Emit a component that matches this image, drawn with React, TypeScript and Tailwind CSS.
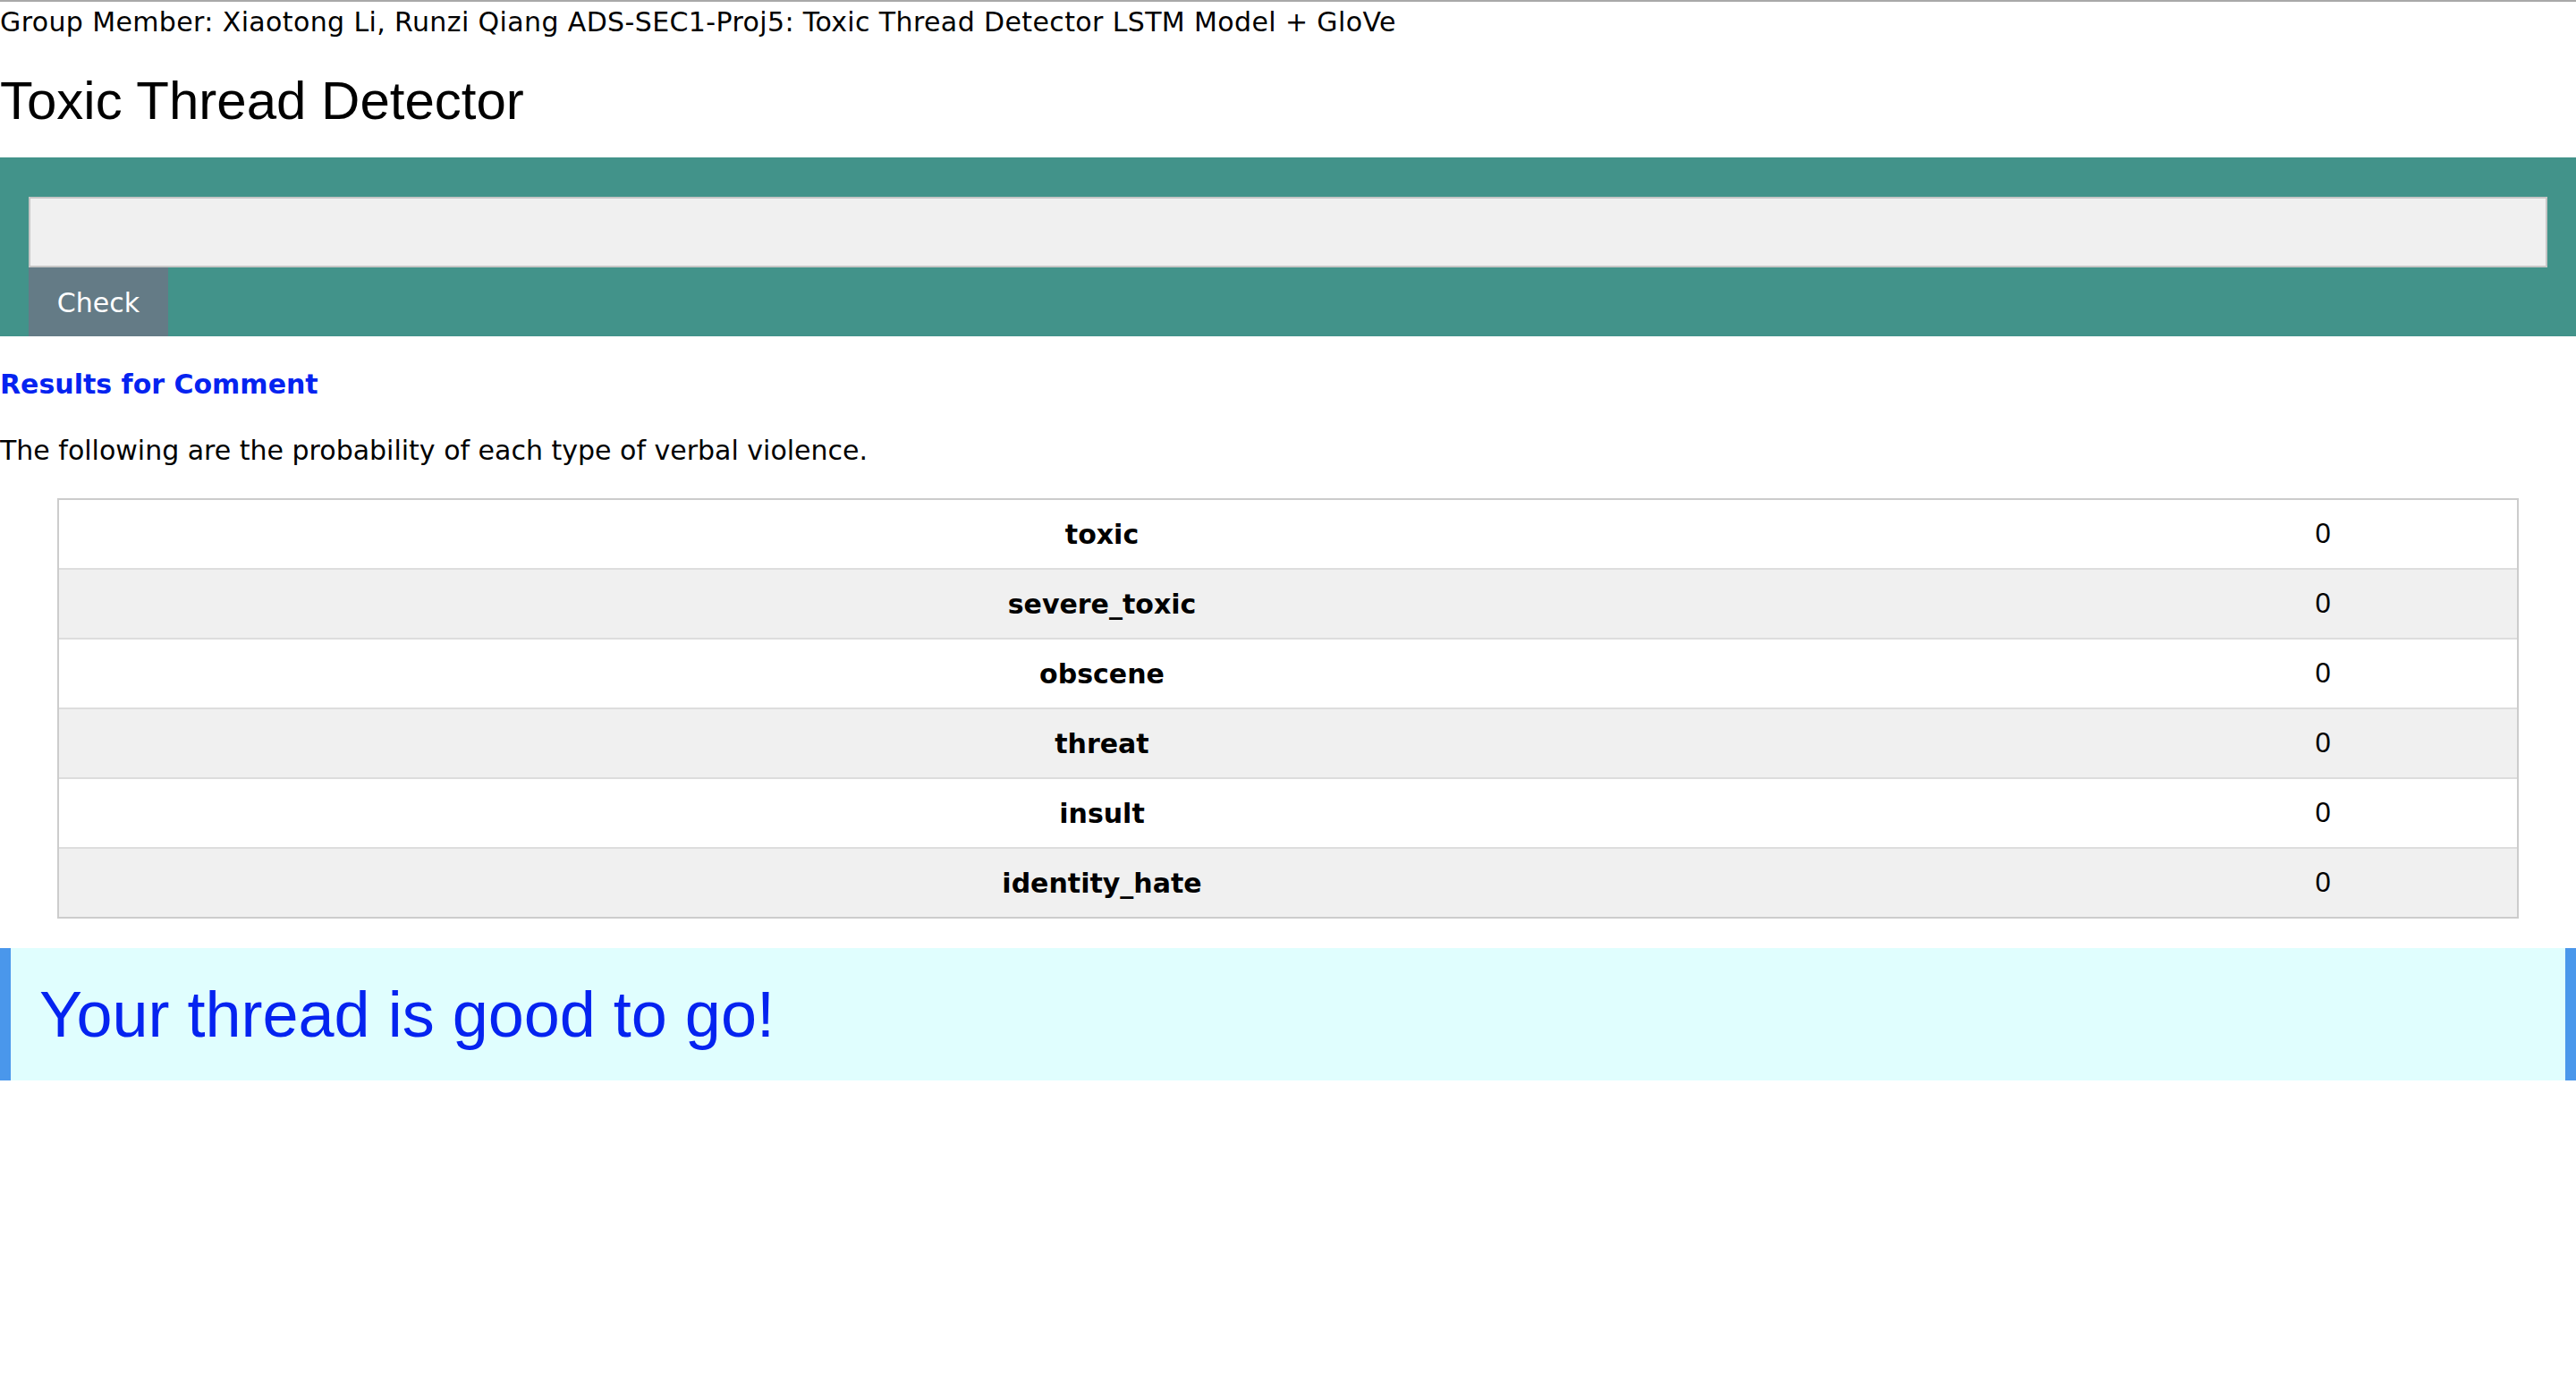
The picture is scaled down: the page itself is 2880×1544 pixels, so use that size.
const rows = [
  { label: "toxic", value: "0" },
  { label: "severe_toxic", value: "0" },
  { label: "obscene", value: "0" },
  { label: "threat", value: "0" },
  { label: "insult", value: "0" },
  { label: "identity_hate", value: "0" },
];

export default function App() {
  return (
    <div className="min-h-screen bg-white border-t-2 border-[#a9a9a9] font-['DejaVu_Sans',Verdana,sans-serif] text-[30px] text-black">
      {/* credits line */}
      <div className="pt-[5px] leading-[36px] whitespace-nowrap tracking-[0.38px]">
        Group Member: Xiaotong Li, Runzi Qiang ADS-SEC1-Proj5: Toxic Thread Detector LSTM Model + GloVe
      </div>

      <h1 className="mt-[35px] font-['Liberation_Sans',Arial,sans-serif] text-[60px] leading-[69px]">
        Toxic Thread Detector
      </h1>

      {/* input form */}
      <form className="mt-[29px] bg-[#42938a] pt-[44px] px-8" onSubmit={(e) => e.preventDefault()}>
        <input
          type="text"
          className="block w-full h-[79px] bg-[#f0f0f0] border-2 border-[#c6c6c6] outline-none px-4"
        />
        <button
          type="submit"
          className="block h-[77px] w-[156px] pt-[3px] bg-[#647b86] text-white text-[30px] leading-[36px]"
        >
          Check
        </button>
      </form>

      <h3 className="mt-[36px] font-bold text-[#0523f0] leading-[36px]">Results for Comment</h3>
      <p className="mt-[38px] leading-[36px]">The following are the probability of each type of verbal violence.</p>

      {/* result table */}
      <div className="mx-16 mt-[35px] border-2 border-[#cccccc]">
        {rows.map((r, i) => (
          <div
            key={r.label}
            className={`grid grid-cols-[2332px_1fr] items-center h-[78px] border-b-2 border-[#dddddd] last:h-[76px] last:border-b-0 ${
              i % 2 === 1 ? "bg-[#f0f0f0]" : "bg-white"
            }`}
          >
            <div className="text-center font-bold">{r.label}</div>
            <div className="text-center pr-[18px] text-[31px] font-['Liberation_Sans',Arial,sans-serif]">{r.value}</div>
          </div>
        ))}
      </div>

      <div className="mt-[33px] h-[148px] flex items-center bg-[#e0fefe] border-x-[12px] border-[#4a97eb] px-8 font-['Liberation_Sans',Arial,sans-serif] text-[72px] leading-[82px] text-[#0523f0]">
        Your thread is good to go!
      </div>
    </div>
  );
}
